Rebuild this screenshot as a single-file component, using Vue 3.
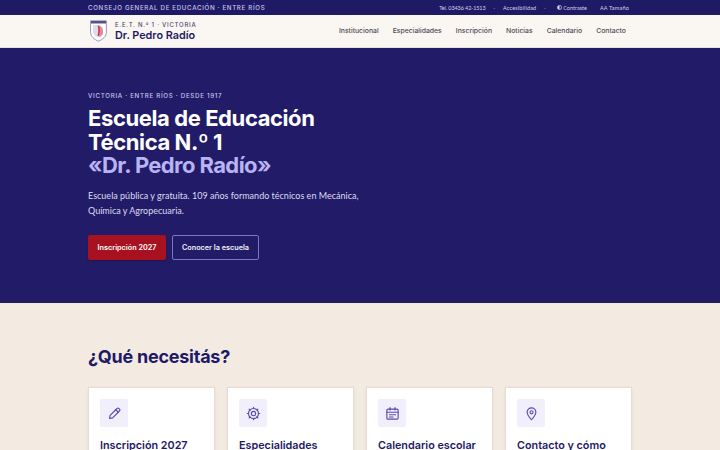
<script setup>
const nav = ['Institucional', 'Especialidades', 'Inscripción', 'Noticias', 'Calendario', 'Contacto']
const cards = [
  { t: 'Inscripción 2027', k: 'pencil' },
  { t: 'Especialidades', k: 'gear' },
  { t: 'Calendario escolar', k: 'cal' },
  { t: 'Contacto y cómo', k: 'pin' }
]
</script>

<template>
  <div class="page">
    <div class="topbar">
      <div class="wrap topbar-in">
        <span class="org">CONSEJO GENERAL DE EDUCACIÓN · ENTRE RÍOS</span>
        <div class="tools">
          <span class="tel">Tel. 03436 42-1513</span><i>·</i>
          <span class="acc">Accesibilidad</span><i>·</i>
          <span class="contrast">
            <svg width="5" height="5" viewBox="0 0 10 10"><circle cx="5" cy="5" r="4.200" fill="none" stroke="#d5d3f0" stroke-width="1.400"/><path d="M5 1a4 4 0 0 0 0 8z" fill="#d5d3f0"/></svg>
            Contraste
          </span>
          <span class="aa">AA Tamaño</span>
        </div>
      </div>
    </div>
    <header class="head">
      <div class="wrap head-in">
        <div class="brand">
          <svg class="crest" width="17" height="22" viewBox="0 0 17 22">
            <path d="M.6.8h15.8v11.400c0 4.300-3.400 7-7.900 9-4.500-2-7.900-4.700-7.900-9z" fill="#fff" stroke="#9a97b5" stroke-width="1"/>
            <path d="M1 1h15v2.500H1z" fill="#55518c"/>
            <path d="M3 5h5v11l-2 1-3-4z" fill="#dcdcf0"/>
            <path d="M8 5c3 .5 5 2.500 5 6v3l-3 3-2-1z" fill="#e08a9c"/>
            <path d="M8 6c1.500 2 1.500 6 0 10" stroke="#c22b3a" stroke-width="1.200" fill="none"/>
          </svg>
          <div class="brand-text">
            <span class="eet">E.E.T. N.º 1 · VICTORIA</span>
            <span class="name">Dr. Pedro Radío</span>
          </div>
        </div>
        <nav class="nav">
          <a v-for="n in nav" :key="n">{{ n }}</a>
        </nav>
      </div>
    </header>
    <section class="hero">
      <div class="wrap">
        <p class="kicker">VICTORIA · ENTRE RÍOS · DESDE 1917</p>
        <h1>Escuela de Educación<br>Técnica N.º 1<br><em>«Dr. Pedro Radío»</em></h1>
        <p class="lead">Escuela pública y gratuita. 109 años formando técnicos en Mecánica,<br>Química y Agropecuaria.</p>
        <div class="cta">
          <a class="btn primary">Inscripción 2027</a>
          <a class="btn ghost">Conocer la escuela</a>
        </div>
      </div>
    </section>
    <section class="needs">
      <div class="wrap">
        <h2>¿Qué necesitás?</h2>
        <div class="cards">
          <article v-for="c in cards" :key="c.k" class="card">
            <div class="ico">
              <svg width="15" height="15" viewBox="0 0 24 24" fill="none" stroke="#5b48b0" stroke-width="1.800" stroke-linecap="round" stroke-linejoin="round">
                <template v-if="c.k === 'pencil'">
                  <path d="M4 20l1-5L16 4a2 2 0 0 1 3 0l1 1a2 2 0 0 1 0 3L9 19z"/>
                  <path d="M14 6l4 4"/>
                </template>
                <template v-else-if="c.k === 'gear'">
                  <circle cx="12" cy="12" r="3.500"/>
                  <circle cx="12" cy="12" r="8"/>
                  <path d="M12 2v2M12 20v2M2 12h2M20 12h2M5 5l1.500 1.500M17.500 17.500L19 19M19 5l-1.500 1.500M6.500 17.500L5 19"/>
                </template>
                <template v-else-if="c.k === 'cal'">
                  <rect x="3" y="5" width="18" height="16" rx="2"/>
                  <path d="M3 10h18M8 2.500v4M16 2.500v4M7 14h10M7 17.500h6"/>
                </template>
                <template v-else>
                  <path d="M12 22c-4-4.500-7-8-7-12a7 7 0 0 1 14 0c0 4-3 7.500-7 12z"/>
                  <circle cx="12" cy="10" r="2.500"/>
                </template>
              </svg>
            </div>
            <h3>{{ c.t }}</h3>
          </article>
        </div>
      </div>
    </section>
  </div>
</template>

<style>
html, body { margin: 0; overflow: hidden; }
</style>

<style scoped>
.page { width: 720px; height: 450px; overflow: hidden; font-family: Lato, "Noto Sans", sans-serif; background: #f3eae2; }
.wrap { width: 544px; margin: 0 auto; }
.topbar { height: 15px; background: #1f1a66; color: #cfcdee; }
.topbar-in { height: 15px; display: flex; align-items: center; justify-content: space-between; width: 541px; margin-left: 88px; }
.org { font: 500 6.200px/15px Inter, sans-serif; letter-spacing: .66px; color: #c9c6ee; white-space: nowrap; }
.tools { display: flex; align-items: center; font-size: 5.500px; color: #d5d3f0; white-space: nowrap; }
.tools i { font-style: normal; margin: 0 8px; opacity: .6; }
.tel { letter-spacing: -.1px; }
.acc { letter-spacing: .15px; }
.contrast { display: inline-flex; align-items: center; gap: 1.500px; margin-left: 3px; }
.aa { margin-left: 13px; letter-spacing: .2px; }
.head { height: 32px; background: #faf7f3; border-bottom: 1px solid #e7e1da; }
.head-in { height: 32px; display: flex; align-items: center; justify-content: space-between; width: 538px; margin-left: 88px; }
.brand { display: flex; align-items: center; gap: 8px; margin-left: 2px; }
.crest { display: block; }
.brand-text { display: flex; flex-direction: column; }
.eet { font: 500 6px/8px Inter, sans-serif; letter-spacing: .74px; color: #4a4770; white-space: nowrap; }
.name { font: 600 10.800px/13px Inter, sans-serif; color: #1f1a66; white-space: nowrap; }
.nav { display: flex; gap: 14px; }
.nav a { font: 500 6.850px/12px Inter, sans-serif; color: #4d4b55; white-space: nowrap; }
.hero { height: 255px; background: #221c68; color: #fff; box-sizing: border-box; padding-top: 43px; }
.kicker { margin: 0; font: 500 6.200px/9px Inter, sans-serif; letter-spacing: .7px; color: #c8c5ee; }
h1 { margin: 7px 0 0; font: 700 22px/23.600px Inter, sans-serif; letter-spacing: -.4px; color: #fff; }
h1 em { font-style: normal; color: #b9b3f3; letter-spacing: -.6px; }
.lead { margin: 10px 0 0; font-size: 10.200px; line-height: 15.500px; color: #dcdaf2; white-space: nowrap; transform: scaleX(.885); transform-origin: left center; }
.cta { margin-top: 16px; display: flex; gap: 6px; }
.btn { display: flex; align-items: center; justify-content: center; height: 25px; box-sizing: border-box; border-radius: 2px; font: 600 7.250px/1 Inter, sans-serif; white-space: nowrap; }
.primary { width: 78px; background: #a8111f; color: #fff; box-shadow: 0 1px 2px rgba(0,0,0,.25); }
.ghost { width: 87px; border: 1px solid #7a76c0; color: #f2f1fb; }
.needs { padding-top: 42px; }
h2 { margin: 0; font: 700 18px/23px Inter, sans-serif; letter-spacing: -.25px; color: #1f1a66; }
.cards { margin-top: 19px; display: grid; grid-template-columns: repeat(4, 127px); gap: 12px; }
.card { background: #fff; height: 120px; box-sizing: border-box; padding: 11px; border: 1px solid #e6dcd4; box-shadow: 0 1px 3px rgba(60,40,30,.08); }
.ico { width: 28px; height: 28px; background: #f1effb; border-radius: 2px; display: flex; align-items: center; justify-content: center; }
h3 { margin: 12px 0 0; font: 600 10.800px/14px Inter, sans-serif; color: #1f1a66; white-space: nowrap; }
</style>
